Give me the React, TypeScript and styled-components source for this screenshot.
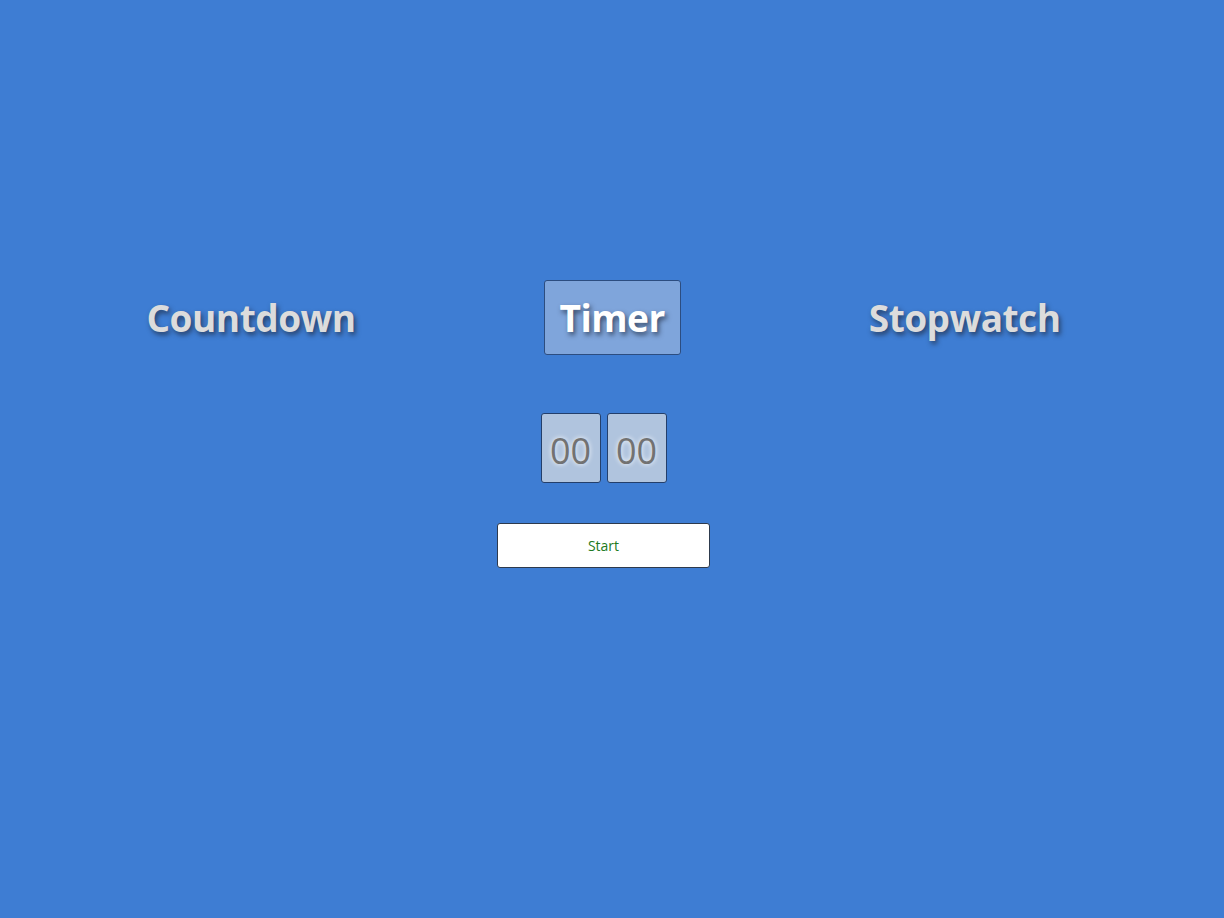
import React from "react";
import styled, { createGlobalStyle } from "styled-components";

const Global = createGlobalStyle`
  html, body { margin: 0; padding: 0; background: #3e7dd3; }
  body { font-family: "Open Sans", "Noto Sans", sans-serif; }
`;

const Page = styled.div`
  min-height: 918px;
  padding: 280px 17px 0 0;
  box-sizing: border-box;
  display: flex;
  flex-direction: column;
  align-items: center;
`;

const TabRow = styled.div`
  display: flex;
  align-items: center;
  gap: 172px;
`;

const Tab = styled.div<{ $active?: boolean }>`
  height: 75px;
  box-sizing: border-box;
  padding: 0 15px;
  display: flex;
  align-items: center;
  border: 1px solid ${(p) => (p.$active ? "#2c4d80" : "transparent")};
  border-radius: 3px;
  background: ${(p) => (p.$active ? "#7fa5db" : "transparent")};
  color: ${(p) => (p.$active ? "#ffffff" : "#dcdcdc")};
  font-size: 37px;
  font-weight: 700;
  letter-spacing: -0.5px;
  text-shadow: 2px 3px 5px rgba(30, 40, 60, 0.7);
  cursor: pointer;
`;

const DigitRow = styled.div`
  display: flex;
  gap: 6px;
  margin-top: 58px;
`;

const Digit = styled.div`
  width: 60px;
  height: 70px;
  box-sizing: border-box;
  border: 1px solid #233f6b;
  border-radius: 3px;
  background: #b0c4de;
  color: #727272;
  font-size: 36px;
  display: flex;
  align-items: center;
  justify-content: center;
  padding-top: 5px;
  text-shadow: 0 0 5px #ffffff;
`;

const StartButton = styled.button`
  margin-top: 40px;
  width: 213px;
  height: 45px;
  box-sizing: border-box;
  background: #ffffff;
  border: 1px solid #2d3a4d;
  border-radius: 3px;
  color: #217a21;
  font-family: "Open Sans", "Noto Sans", sans-serif;
  font-size: 14px;
  cursor: pointer;
`;

export default function App() {
  return (
    <>
      <Global />
      <Page>
        <TabRow>
          <Tab>Countdown</Tab>
          <Tab $active>Timer</Tab>
          <Tab>Stopwatch</Tab>
        </TabRow>
        <DigitRow>
          <Digit>00</Digit>
          <Digit>00</Digit>
        </DigitRow>
        <StartButton>Start</StartButton>
      </Page>
    </>
  );
}
